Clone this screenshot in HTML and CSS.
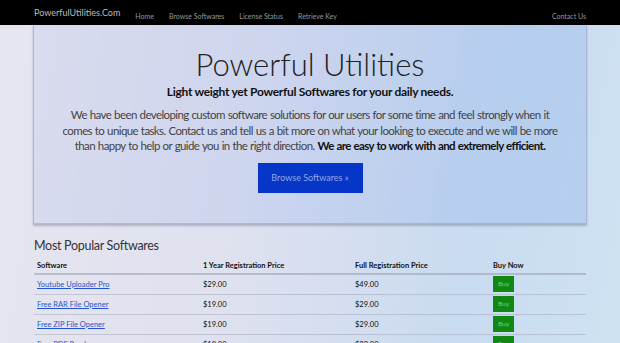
FILE: index.html
```html
<!DOCTYPE html>
<html>

	<head>
		<meta charset="UTF-8">
		<title>PowerfulUtilities.Com</title>
		<link rel="stylesheet" href="styles.css">
	</head>

	<body>
		<div class="navbar">
			<div class="container nav-inner">
				<a class="brand" href="#">PowerfulUtilities.Com</a>
				<ul class="nav">
					<li><a href="#">Home</a></li>
					<li><a href="#">Browse Softwares</a></li>
					<li><a href="#">License Status</a></li>
					<li><a href="#">Retrieve Key</a></li>
				</ul>
				<ul class="nav nav-right">
					<li><a href="#">Contact Us</a></li>
				</ul>
			</div>
		</div>
		<div class="container">
			<div class="jumbotron">
				<h1>Powerful Utilities</h1>
				<p class="lead">Light weight yet Powerful Softwares for your daily needs.</p>
				<p class="intro">We have been developing custom software solutions for our users for some time and feel strongly when it<br>comes to unique tasks. Contact us and tell us a bit more on what your looking to execute and we will be more<br>than happy to help or guide you in the right direction. <b>We are easy to work with and extremely efficient.</b></p>
				<a class="btn-browse" href="#">Browse Softwares &raquo;</a>
			</div>
			<h2>Most Popular Softwares</h2>
			<table class="soft-table">
				<tr>
					<th class="c1">Software</th>
					<th class="c2">1 Year Registration Price</th>
					<th class="c3">Full Registration Price</th>
					<th class="c4">Buy Now</th>
				</tr>
				<tr>
					<td><a href="#">Youtube Uploader Pro</a></td>
					<td>$29.00</td>
					<td>$49.00</td>
					<td><a class="btn-buy" href="#">Buy</a></td>
				</tr>
				<tr>
					<td><a href="#">Free RAR File Opener</a></td>
					<td>$19.00</td>
					<td>$29.00</td>
					<td><a class="btn-buy" href="#">Buy</a></td>
				</tr>
				<tr>
					<td><a href="#">Free ZIP File Opener</a></td>
					<td>$19.00</td>
					<td>$29.00</td>
					<td><a class="btn-buy" href="#">Buy</a></td>
				</tr>
				<tr>
					<td><a href="#">Free PDF Reader</a></td>
					<td>$19.00</td>
					<td>$29.00</td>
					<td><a class="btn-buy" href="#">Buy</a></td>
				</tr>
			</table>
		</div>
	</body>

</html>
```

FILE: styles.css
```css
* {
	margin: 0;
	padding: 0;
	box-sizing: border-box;
}

body {
	font-family: Lato, "Open Sans", sans-serif;
	color: #333;
	background: linear-gradient(100deg, #e6e6ef 0%, #dfe1ef 40%, #c9dbf0 75%, #cfe2f2 100%);
	min-height: 343px;
}

.container {
	width: 552px;
	margin: 0 auto;
}

/* top bar */
.navbar {
	background-color: #000;
	height: 25px;
}

.nav-inner {
	display: flex;
	align-items: center;
	height: 25px;
}

.brand {
	color: #bbb;
	font-size: 9px;
	text-decoration: none;
	margin-right: 15px;
}

.nav {
	list-style: none;
	display: flex;
	gap: 15px;
}

.nav a {
	color: #999;
	font-size: 7px;
	text-decoration: none;
}

.nav-right {
	margin-left: auto;
}

/* big box */
.jumbotron {
	margin: 0 -1px;
	height: 199px;
	padding-top: 19px;
	text-align: center;
	background: linear-gradient(100deg, rgba(170, 180, 235, 0.2), rgba(115, 160, 232, 0.25));
	border: 1px solid rgba(140, 145, 175, 0.45);
	border-top: none;
	box-shadow: 0 2px 2px rgba(80, 90, 120, 0.35);
}

.jumbotron h1 {
	font-weight: 300;
	font-size: 31px;
	line-height: 40px;
	color: #222;
}

.lead {
	font-weight: bold;
	font-size: 12px;
	letter-spacing: -0.3px;
	color: #111;
}

.intro {
	font-size: 11.5px;
	letter-spacing: -0.6px;
	word-spacing: 0.5px;
	line-height: 15.5px;
	color: #444;
	margin-top: 8px;
	white-space: nowrap;
}

.intro b {
	color: #111;
}

.btn-browse {
	display: inline-block;
	margin-top: 9px;
	width: 105px;
	height: 30px;
	line-height: 30px;
	background-color: #0536c8;
	color: #8fa8e6;
	font-size: 9px;
	text-decoration: none;
}

h2 {
	font-weight: normal;
	font-size: 12.5px;
	letter-spacing: -0.3px;
	color: #333;
	margin-top: 14px;
}

/* list of softwares */
.soft-table {
	width: 100%;
	border-collapse: collapse;
	margin-top: 6px;
	font-size: 7.5px;
	color: #111;
}

.soft-table th {
	text-align: left;
	padding: 2px 3px 3px;
	border-bottom: 2px solid rgba(150, 150, 170, 0.5);
}

.soft-table td {
	padding: 1px 3px;
	height: 20px;
	border-bottom: 1px solid rgba(150, 150, 170, 0.4);
}

.soft-table .c1 {
	width: 166px;
}

.soft-table .c2 {
	width: 152px;
}

.soft-table .c3 {
	width: 138px;
}

.soft-table td a {
	color: #1f55d0;
}

.btn-buy {
	display: inline-block;
	width: 21px;
	height: 16px;
	line-height: 16px;
	text-align: center;
	background-color: #118811;
	color: #7fc87f !important;
	font-size: 6.5px;
	text-decoration: none;
}
```
